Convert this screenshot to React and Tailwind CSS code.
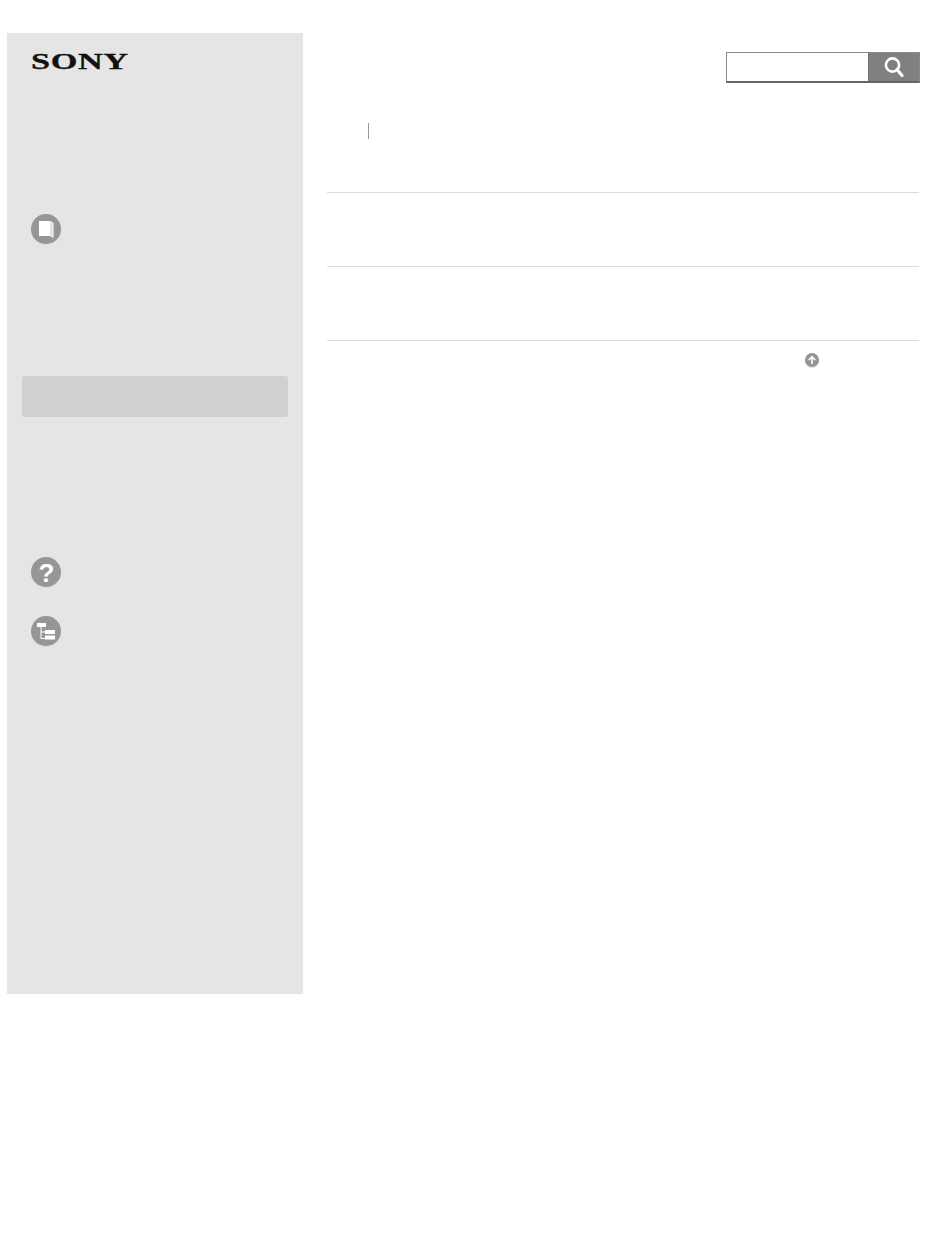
export default function App() {
  return (
    <div className="relative min-h-[1237px] w-[950px] bg-white pt-[33px] pl-[7px] flex items-start font-['Liberation_Sans',sans-serif]">
      <aside className="w-[296px] h-[961px] shrink-0 bg-[#e5e5e5] flex flex-col">
        <div className="h-[21px] mt-[18px] ml-[24px] flex items-center">
          <span className="font-['Liberation_Serif',serif] font-bold text-[23px] leading-none text-[#111] origin-left scale-x-[1.49] tracking-[0.4px] [-webkit-text-stroke:0.3px_#111]">SONY</span>
        </div>
        <div className="mt-[142px] ml-[24px]">
          <RoundIcon>
            <path d="M8 7 L19 7 L22.5 9 L22.5 24 L19 22 L8 22 Z" fill="#fff" />
            <path d="M19 8 L21.8 9.6 L21.8 22.8 L19 21.2 Z" fill="#e2e2e2" />
          </RoundIcon>
        </div>
        <div className="mt-[130px] mx-[15px] h-[41px] rounded-[3px] bg-[#d0d0d0]" />
        <div className="mt-[140px] ml-[24px]">
          <RoundIcon>
            <text x="15.5" y="25" textAnchor="middle" fontFamily="'Liberation Sans', sans-serif" fontWeight="700" fontSize="26" fill="#fff">?</text>
          </RoundIcon>
        </div>
        <div className="mt-[27px] ml-[24px]">
          <RoundIcon>
            <rect x="6" y="7" width="9" height="4" fill="#fff" />
            <path d="M10 11 V22.5 H14 M10 16 H14" stroke="#fff" strokeWidth="1" fill="none" />
            <rect x="14" y="14" width="10" height="4" fill="#fff" />
            <rect x="14" y="19.5" width="10" height="4" fill="#fff" />
          </RoundIcon>
        </div>
      </aside>
      <main className="w-[593px] ml-[24px] relative">
        <div className="flex justify-end pt-[19px] h-[90px]">
          <div className="flex w-[194px] h-[31px] border border-[#8a8a8a] border-b-2 border-b-[#666] bg-white">
            <div className="flex-1" />
            <div className="w-[51px] bg-[#808080] border-l border-[#6e6e6e] flex items-center justify-center">
              <svg width="22" height="22" viewBox="0 0 22 22" fill="none">
                <circle cx="9.5" cy="9" r="6.6" stroke="#fff" strokeWidth="2.6" />
                <path d="M14 13.5 L19 19.5" stroke="#fff" strokeWidth="3.2" strokeLinecap="round" />
              </svg>
            </div>
          </div>
        </div>
        <div className="ml-[41px] w-px h-[16px] bg-[#999]" />
        <div className="mt-[53px] mr-px h-px bg-[#dcdcdc]" />
        <div className="mt-[73px] mr-px h-px bg-[#dcdcdc]" />
        <div className="mt-[73px] mr-px h-px bg-[#dcdcdc]" />
        <div className="flex justify-end pr-[101px] pt-[12px]">
          <div className="w-[14px] h-[14px] rounded-full bg-[#959595] flex items-center justify-center shadow-[0_1px_1px_rgba(0,0,0,0.12)]">
            <svg width="10" height="10" viewBox="0 0 10 10" fill="none">
              <path d="M5 9 V2 M1.8 5 L5 1.6 L8.2 5" stroke="#fff" strokeWidth="1.6" />
            </svg>
          </div>
        </div>
      </main>
    </div>
  );
}

function RoundIcon({ children }) {
  return (
    <svg width="30" height="32" viewBox="0 0 30 32" className="block">
      <ellipse cx="15" cy="16" rx="15" ry="15" fill="#000" opacity="0.07" />
      <circle cx="15" cy="15" r="15" fill="#969696" />
      {children}
    </svg>
  );
}
